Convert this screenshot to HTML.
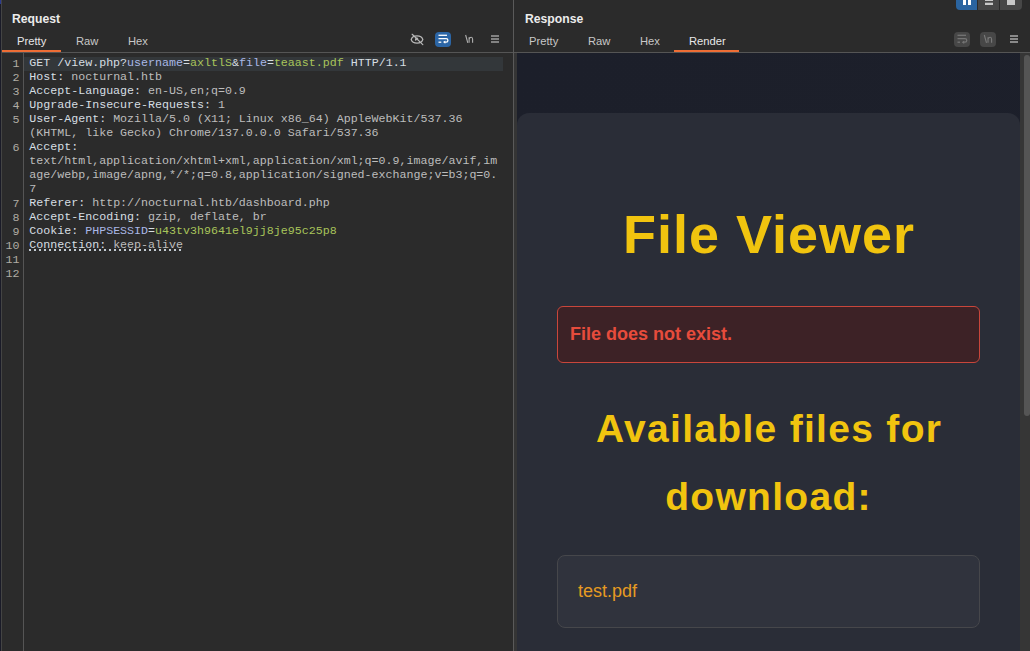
<!DOCTYPE html>
<html><head><meta charset="utf-8">
<style>
*{margin:0;padding:0;box-sizing:border-box}
html,body{width:1030px;height:651px;overflow:hidden;background:#2b2b2b;font-family:"Liberation Sans",sans-serif;position:relative}
.abs{position:absolute}
.title{position:absolute;top:11.5px;font-size:12.2px;font-weight:bold;color:#ececec}
.tab{position:absolute;top:35px;font-size:11.2px;color:#c8c8c8}
.ul{position:absolute;height:2px;background:#ee6d35}
.hline{position:absolute;height:1px;background:#4e4e4e}
.vline{position:absolute;width:1px;background:#4e4e4e}
.code{position:absolute;left:29.3px;top:56px;font-family:"Liberation Mono",monospace;font-size:11.65px;line-height:14px;color:#d6dee2;white-space:pre}
.code .l{height:14px}
.nums{position:absolute;left:0;top:57px;width:19.5px;text-align:right;font-family:"Liberation Mono",monospace;font-size:11.65px;line-height:14px;color:#b0aca4;white-space:pre}
.k{color:#bdbdbd}
.pn{color:#a9b7e6}
.pv{color:#a8c45a}
.render{position:absolute;left:517px;top:53px;width:503px;height:598px;background:linear-gradient(135deg,#1c1f2a,#1d202b)}
.card{position:absolute;left:517px;top:113px;width:503px;height:560px;background:#2a2d37;border-radius:12px}
.h1{position:absolute;left:517px;width:503px;text-align:center;top:204px;font-size:54px;font-weight:bold;color:#f1c40f;line-height:60px;letter-spacing:1px;text-indent:1px}
.err{position:absolute;left:557px;top:306px;width:423px;height:57px;background:#3d2226;border:1px solid #c9463b;border-radius:6px}
.err span{position:absolute;left:12px;top:17px;font-size:18px;font-weight:bold;color:#e74c3c}
.h2{position:absolute;left:517px;width:503px;text-align:center;top:395px;font-size:39px;font-weight:bold;color:#f1c40f;line-height:68px;letter-spacing:1.3px;text-indent:1.3px}
.file{position:absolute;left:557px;top:555px;width:423px;height:73px;background:#30333d;border:1px solid #46474b;border-radius:8px}
.file span{position:absolute;left:20px;top:25px;font-size:18px;color:#e69b22}
.sbtrack{position:absolute;left:1020px;top:53px;width:10px;height:598px;background:#363636}
.sbthumb{position:absolute;left:1024px;top:55px;width:6px;height:361px;background:#555;border-radius:3px}
</style></head><body>
<!-- left edge -->
<div class="abs" style="left:0;top:0;width:1px;height:651px;background:#1a1b28"></div><div class="abs" style="left:0;top:0;width:1px;height:4px;background:#2a3a90"></div>
<div class="abs" style="left:1px;top:0;width:1px;height:651px;background:#444"></div>

<div class="title" style="left:12px">Request</div>
<div class="tab" style="left:17px;color:#e8e8e8">Pretty</div>
<div class="tab" style="left:76px">Raw</div>
<div class="tab" style="left:128px">Hex</div>
<div class="ul" style="left:2px;top:50px;width:59px"></div>
<div class="hline" style="left:2px;top:52px;width:1028px;background:#555"></div>
<div class="vline" style="left:23px;top:53px;height:598px;background:#555"></div>
<div class="abs" style="left:24px;top:57px;width:479px;height:14px;background:#33373a"></div>

<div class="nums">1
2
3
4
5

6



7
8
9
10
11
12</div>
<div class="code"><div class="l">GET /view.php?<span class="pn">username</span>=<span class="pv">axltlS</span>&amp;<span class="pn">file</span>=<span class="pv">teaast.pdf</span> HTTP/1.1</div><div class="l">Host: <span class="k">nocturnal.htb</span></div><div class="l">Accept-Language: <span class="k">en-US,en;q=0.9</span></div><div class="l">Upgrade-Insecure-Requests: <span class="k">1</span></div><div class="l">User-Agent: <span class="k">Mozilla/5.0 (X11; Linux x86_64) AppleWebKit/537.36</span></div><div class="l"><span class="k">(KHTML, like Gecko) Chrome/137.0.0.0 Safari/537.36</span></div><div class="l">Accept:</div><div class="l"><span class="k">text/html,application/xhtml+xml,application/xml;q=0.9,image/avif,im</span></div><div class="l"><span class="k">age/webp,image/apng,*/*;q=0.8,application/signed-exchange;v=b3;q=0.</span></div><div class="l"><span class="k">7</span></div><div class="l">Referer: <span class="k">http://nocturnal.htb/dashboard.php</span></div><div class="l">Accept-Encoding: <span class="k">gzip, deflate, br</span></div><div class="l">Cookie: <span class="pn">PHPSESSID</span>=<span class="pv">u43tv3h9641el9jj8je95c25p8</span></div><div class="l">Connection: <span class="k">keep-alive</span></div><div class="l"></div><div class="l"></div></div>

<div class="abs" style="left:29px;top:249px;width:155px;height:2px;background-image:linear-gradient(90deg,#c4ccd4 2px,transparent 2px);background-size:5px 2px"></div>
<div class="vline" style="left:513px;top:0;height:651px;background:#5a5a5a"></div>

<div class="title" style="left:525px">Response</div>
<div class="tab" style="left:529px">Pretty</div>
<div class="tab" style="left:588px">Raw</div>
<div class="tab" style="left:640px">Hex</div>
<div class="tab" style="left:689px;color:#e8e8e8">Render</div>
<div class="ul" style="left:674px;top:50px;width:65px"></div>


<div class="abs" style="left:514px;top:53px;width:3px;height:598px;background:#353535"></div><div class="render"></div>
<div class="card"></div>
<div class="h1">File Viewer</div>
<div class="err"><span>File does not exist.</span></div>
<div class="h2">Available files for<br>download:</div>
<div class="file"><span>test.pdf</span></div>
<div class="sbtrack"></div>
<div class="sbthumb"></div>

<!-- left panel icons -->
<svg class="abs" style="left:405px;top:28px" width="100" height="24" viewBox="405 28 100 24">
  <g fill="none" stroke="#b8b8b8" stroke-width="1.25" stroke-linecap="round">
    <path d="M411.2 39.5 C412.6 34.6 421.4 34.6 422.8 39.5 C421.4 44.4 412.6 44.4 411.2 39.5 Z"/>
    <path d="M412.2 34.3 L422.8 44.6"/>
  </g>
  <path d="M416.6 37.6 A2 2 0 0 0 415.6 41 L418.4 38.3 A2 2 0 0 0 416.6 37.6Z" fill="#b8b8b8"/>
  <rect x="435" y="32" width="16" height="15" rx="4" fill="#2c66a6"/>
  <g fill="none" stroke="#ffffff" stroke-width="1.3">
    <path d="M438.5 35.3 H447"/>
    <path d="M438.5 38.7 H446.2 A1.7 1.7 0 0 1 446.2 42.1 H444.5"/>
    <path d="M438.5 42.2 H441.3"/>
  </g>
  <path d="M445.3 40.5 L443 42.1 L445.3 43.7 Z" fill="#ffffff"/>
  <g fill="none" stroke="#b0b0b0" stroke-width="1.1">
    <path d="M465.6 35 L467.8 42.8"/>
    <path d="M469.1 37.2 V42.8 M469.1 39.2 Q469.6 37.2 471.2 37.2 Q472.6 37.2 472.6 39.2 V42.8"/>
  </g>
  <g fill="#828282">
    <rect x="491" y="35" width="8" height="2"/>
    <rect x="491" y="38" width="8" height="2"/>
    <rect x="491" y="41" width="8" height="2"/>
  </g>
</svg>
<!-- right panel icons -->
<svg class="abs" style="left:945px;top:0px" width="85" height="52" viewBox="945 0 85 52">
  <path d="M956 0 H977 V10 H960 A4 4 0 0 1 956 6 Z" fill="#2a64a0"/>
  <rect x="978" y="0" width="21" height="10" fill="#474747"/>
  <path d="M1000 0 H1022 V6 A4 4 0 0 1 1018 10 H1000 Z" fill="#474747"/>
  <rect x="963" y="0" width="3" height="5" fill="#fff"/>
  <rect x="968" y="0" width="3" height="5" fill="#fff"/>
  <rect x="985" y="0" width="8" height="1" fill="#c8c8c8"/>
  <rect x="985" y="2.7" width="8" height="2.3" fill="#c8c8c8"/>
  <rect x="1007" y="0" width="8" height="5" fill="#c8c8c8"/>
  <rect x="954" y="32" width="16" height="15" rx="4" fill="#474747"/>
  <g fill="none" stroke="#747474" stroke-width="1.3">
    <path d="M957.5 35.3 H966"/>
    <path d="M957.5 38.7 H965 A1.75 1.75 0 0 1 965 42.2 H963"/>
    <path d="M957.5 42.2 H960"/>
  </g>
  <path d="M964.2 40.4 L961.8 42.2 L964.2 44 Z" fill="#747474"/>
  <rect x="980" y="32" width="16" height="15" rx="4" fill="#474747"/>
  <g fill="none" stroke="#7a7a7a" stroke-width="1.1">
    <path d="M984.3 35 L986.5 42.8"/>
    <path d="M988 37.2 V42.8 M988 39.2 Q988.5 37.2 990.2 37.2 Q991.6 37.2 991.6 39.2 V42.8"/>
  </g>
  <g fill="#8a8a8a">
    <rect x="1010" y="35" width="8" height="2"/>
    <rect x="1010" y="38" width="8" height="2"/>
    <rect x="1010" y="41" width="8" height="2"/>
  </g>
</svg>
</body></html>
